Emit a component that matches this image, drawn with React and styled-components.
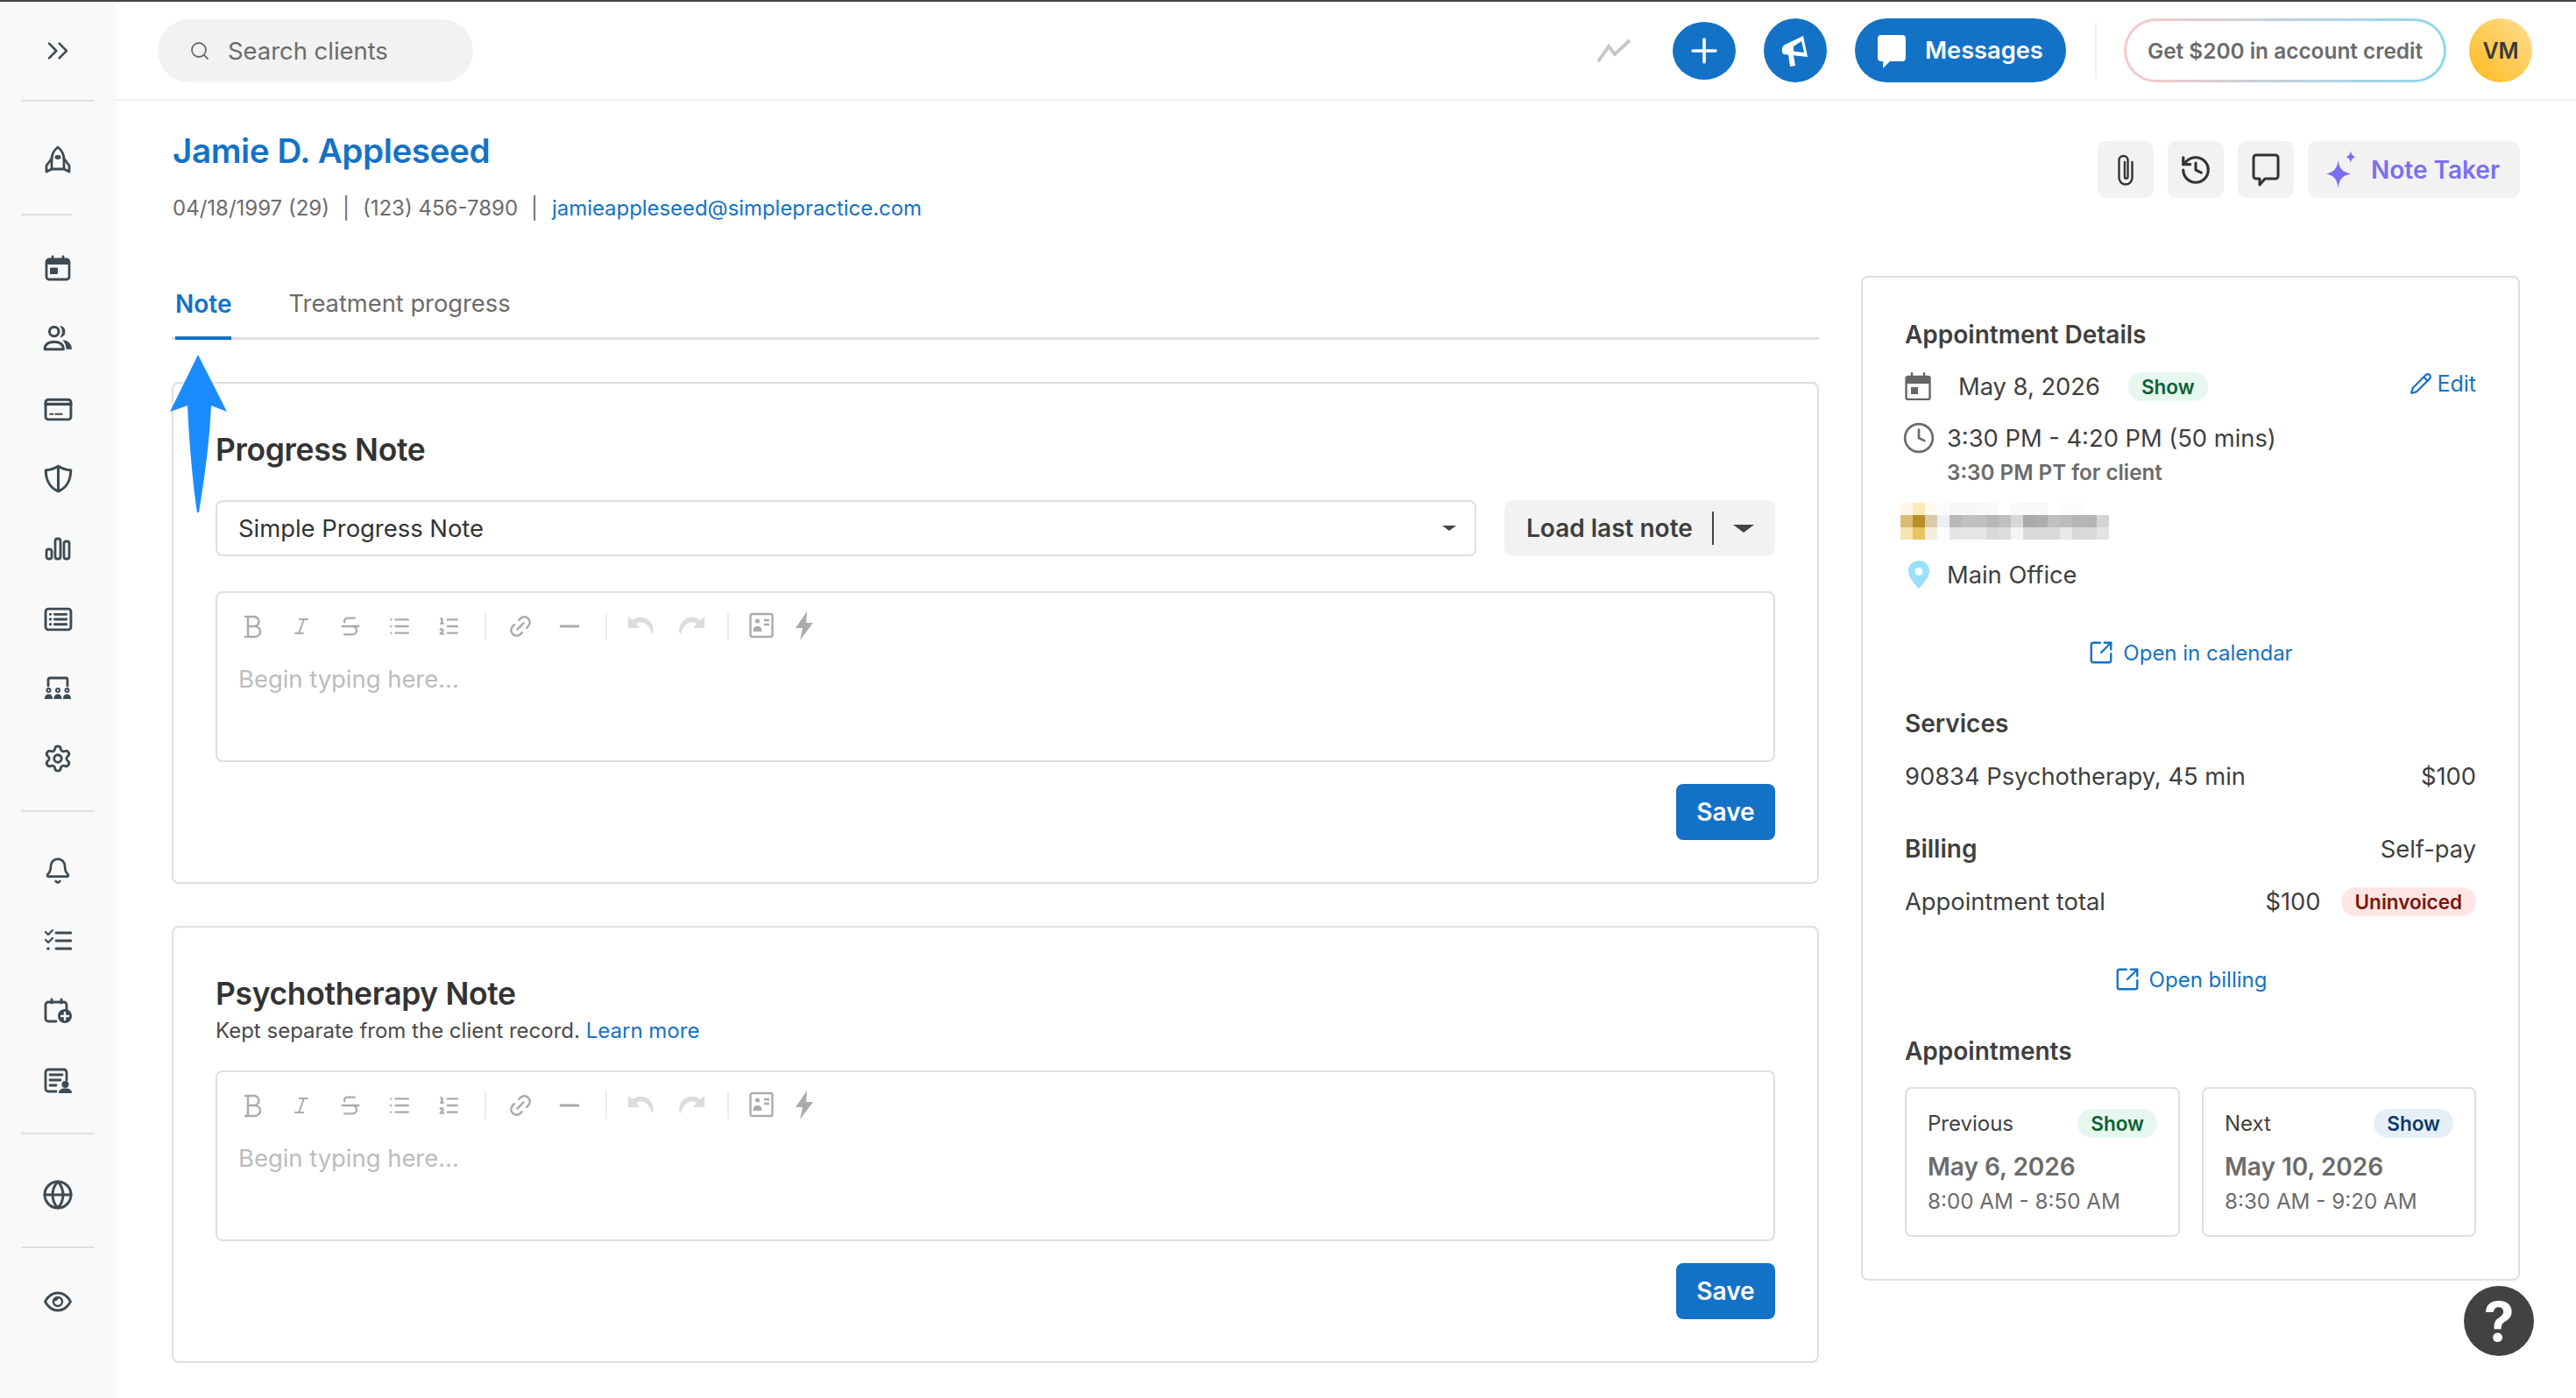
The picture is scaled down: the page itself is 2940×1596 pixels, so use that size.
import React from "react";
import styled, { createGlobalStyle } from "styled-components";
import { ChevronsRight, Settings, Bell, Globe, Search, History, Italic, Strikethrough, List, ListOrdered, Link2, Minus, Pencil, SquareArrowOutUpRight, Clock, Plus } from "lucide-react";

const Global = createGlobalStyle`
  html, body { margin: 0; padding: 0; background: #fff; }
  body { font-family: Inter, "Noto Sans", "Liberation Sans", sans-serif; color: #3d3d3d; width: 2940px; height: 1596px; overflow: hidden; }
  * { box-sizing: border-box; }
`;

const BLUE = "#1472c6";
const INK = "#3f3f3f";
const GRAY = "#6b6b6b";
const LINE = "#dfdfdf";
const NAV = "#3e4a52";

const Page = styled.div`display: flex; width: 2940px; height: 1596px; border-top: 2px solid #3f4444; position: relative; overflow: hidden;`;
const Sidebar = styled.nav`width: 132px; flex: none; background: #f9f9f9; display: flex; flex-direction: column;`;
const NavGroup = styled.div`display: flex; flex-direction: column; align-items: center; padding-top: ${p => p.$top}px; padding-bottom: ${p => p.$bottom}px;`;
const NavItem = styled.div`height: ${p => p.$h || 80}px; width: 100%; display: flex; align-items: center; justify-content: center; color: ${NAV}; svg { display: block; }`;
const NavRule = styled.div`height: 2px; background: #e0e0e0; margin-left: 24px; width: ${p => (p.$short ? 58 : 84)}px;`;

const Main = styled.div`flex: 1; min-width: 0; display: flex; flex-direction: column;`;
const TopBar = styled.header`height: 113px; flex: none; border-bottom: 2px solid #f1f1f1; display: flex; align-items: center; padding: 0 50px 0 48px;`;
const SearchPill = styled.div`width: 360px; height: 72px; border-radius: 36px; background: #f2f2f2; display: flex; align-items: center; gap: 20px; padding-left: 36px; color: ${GRAY}; font-size: 27.4px;`;
const Spacer = styled.div`flex: 1;`;
const RoundButton = styled.div`width: 72px; height: ${p => p.$h || 73}px; border-radius: 50%; background: ${BLUE}; color: #fff; display: flex; align-items: center; justify-content: center; margin-left: ${p => p.$ml}px; flex: none;`;
const TrendBox = styled.div`display: flex; color: #c6c6c6;`;
const MessagesButton = styled.div`width: 241px; height: 73px; border-radius: 37px; background: ${BLUE}; color: #fff; display: flex; align-items: center; gap: 21px; padding-left: 25px; margin-left: 32px; font-size: 27.2px; font-weight: 600;`;
const BarRule = styled.div`width: 2px; height: 65px; background: #f0f0f0; margin-left: 33px;`;
const CreditPill = styled.div`width: 368px; height: 73px; border-radius: 37px; margin-left: 31px; padding: 3px; background: linear-gradient(90deg, #f8c9c9, #8ad8ee);`;
const CreditInner = styled.div`width: 100%; height: 100%; border-radius: 34px; background: #fff; display: flex; align-items: center; justify-content: center; font-size: 24.4px; font-weight: 600; color: ${GRAY};`;
const Avatar = styled.div`width: 72px; height: 73px; border-radius: 50%; margin-left: 26px; background: linear-gradient(45deg, #ffb81c, #ffdf94); display: flex; align-items: center; justify-content: center; font-size: 25px; font-weight: 600; color: #3a3a3a;`;

const Content = styled.div`padding: 0 64px; display: flex; flex-direction: column; position: relative;`;
const Head = styled.div`display: flex; justify-content: space-between; height: 200px; flex: none;`;
const HeadLeft = styled.div`padding-top: 29px; padding-left: 1px;`;
const ClientName = styled.div`font-size: 38.6px; line-height: 56px; font-weight: 600; color: ${BLUE}; letter-spacing: -0.4px;`;
const ClientInfo = styled.div`font-size: 24px; line-height: 40px; margin-top: 18px; color: ${GRAY}; display: flex; gap: 15px;`;
const BlueLink = styled.span`color: ${BLUE};`;
const EmailLink = styled(BlueLink)`font-size: 23.9px; margin-left: 1px;`;
const HeadActions = styled.div`display: flex; gap: 16px; padding-top: 46px;`;
const ActionButton = styled.div`width: 64px; height: 65px; border-radius: 10px; background: #f2f2f2; display: flex; align-items: center; justify-content: center; color: #333;`;
const NoteTaker = styled.div`width: 242px; height: 65px; border-radius: 10px; background: #f2f2f2; display: flex; align-items: center; gap: 14px; padding-left: 20px; color: #7a6ff0; font-size: 28px; font-weight: 600;`;

const Columns = styled.div`display: grid; grid-template-columns: 1880px 752px; column-gap: 48px; align-items: start;`;
const LeftCol = styled.div`display: flex; flex-direction: column;`;
const Tabs = styled.div`height: 73px; border-bottom: 3px solid ${LINE}; display: flex; padding-left: 4px; gap: 65px; margin-bottom: 48px;`;
const Tab = styled.div`height: 73px; display: flex; align-items: flex-start; padding-top: 13px; line-height: 38px; font-size: ${p => (p.$active ? 28 : 27.3)}px; font-weight: ${p => (p.$active ? 600 : 400)}; color: ${p => (p.$active ? BLUE : GRAY)}; border-bottom: ${p => (p.$active ? `4px solid ${BLUE}` : "none")};`;
const Card = styled.section`border: 2px solid ${LINE}; border-radius: 8px; padding: ${p => p.$top}px 48px 48px; margin-bottom: 48px;`;
const CardTitle = styled.h2`margin: 0; font-size: 35.4px; line-height: 44px; font-weight: 600; color: #333; letter-spacing: -0.3px;`;
const CardSub = styled.div`font-size: 24px; line-height: 36px; margin-top: 2px; color: #4a4a4a;`;
const SelectRow = styled.div`display: flex; gap: 32px; margin-top: 35px;`;
const SelectBox = styled.div`flex: 1; height: 64px; border: 2px solid ${LINE}; border-radius: 8px; display: flex; align-items: center; justify-content: space-between; padding: 0 21px 0 24px; font-size: 27.4px; color: #333;`;
const Caret = styled.span`width: 0; height: 0; border-left: ${p => p.$s}px solid transparent; border-right: ${p => p.$s}px solid transparent; border-top: ${p => p.$s * 0.75}px solid #444;`;
const LoadButton = styled.div`width: 309px; flex: none; height: 64px; border-radius: 10px; background: #f2f2f2; display: flex; align-items: center; padding-left: 25px; font-size: 28px; font-weight: 600; color: ${INK};`;
const LoadRule = styled.span`width: 2px; height: 38px; background: #444; margin: 0 22px 0 22px;`;
const Editor = styled.div`margin-top: ${p => p.$mt}px; height: 195px; border: 2px solid ${LINE}; border-radius: 8px;`;
const Toolbar = styled.div`display: flex; align-items: center; height: 36px; margin-top: 20px; padding-left: 12px;`;
const Tool = styled.span`width: ${p => p.$w || 56}px; height: 36px; flex: none; display: flex; align-items: center; justify-content: center; color: #ababab;`;
const ToolRule = styled.span`width: 2px; height: 32px; background: #ededed; margin-left: ${p => p.$ml || 13}px; margin-right: ${p => p.$mr || 11}px;`;
const Placeholder = styled.div`margin: 22px 0 0 24px; font-size: 27.4px; line-height: 40px; color: #bcbcbc;`;
const SaveRow = styled.div`display: flex; justify-content: flex-end; margin-top: 25px;`;
const SaveButton = styled.div`width: 113px; height: 64px; border-radius: 8px; background: ${BLUE}; color: #fff; display: flex; align-items: center; justify-content: center; font-size: 28px; font-weight: 600;`;

const Panel = styled.aside`border: 2px solid ${LINE}; border-radius: 8px; padding: 45px 48px 48px; height: 1147px;`;
const PanelTitle = styled.div`font-size: 28px; line-height: 40px; font-weight: 600; color: ${INK}; margin-top: ${p => p.$mt || 0}px;`;
const Row = styled.div`display: flex; align-items: center; height: 40px; font-size: 27.3px; color: ${INK}; margin-top: ${p => p.$mt || 0}px; justify-content: ${p => (p.$between ? "space-between" : "flex-start")};`;
const IconSlot = styled.span`width: ${p => p.$w}px; flex: none; display: flex; color: ${GRAY};`;
const ClockWrap = styled.span`display: flex; margin: 0 -3px;`;
const PinWrap = styled.span`display: flex; margin-left: 4px;`;
const Badge = styled.span`display: inline-flex; align-items: center; justify-content: center; height: 33px; padding: 0 ${p => p.$pad || 15}px; margin-left: ${p => p.$ml || 0}px; border-radius: 17px; font-size: 22.5px; font-weight: 600; background: ${p => p.$bg}; color: ${p => p.$fg}; flex: none;`;
const EditLink = styled.span`margin-left: auto; display: flex; align-items: center; gap: 5px; color: ${BLUE}; font-size: 25px; position: relative; top: -3px;`;
const SubLine = styled.div`font-size: 24.2px; line-height: 36px; font-weight: 600; color: ${GRAY}; margin: 2px 0 0 48px;`;
const Pixelated = styled.svg`display: block; margin: 16px 0 0 -5px;`;
const OpenLink = styled.div`display: flex; justify-content: center; align-items: center; gap: 10px; height: 40px; font-size: 24px; color: ${BLUE}; margin-top: ${p => p.$mt}px;`;
const Right = styled.div`display: flex; align-items: center; gap: 23px;`;
const MiniCards = styled.div`display: grid; grid-template-columns: 314px 313px; column-gap: 25px; margin-top: 21px;`;
const MiniCard = styled.div`height: 171px; border: 2px solid ${LINE}; border-radius: 8px; padding: 22px 24px 0;`;
const MiniHead = styled.div`display: flex; justify-content: space-between; align-items: center; height: 35px; font-size: 24px; color: ${INK};`;
const MiniDate = styled.div`font-size: 28px; line-height: 40px; font-weight: 600; color: ${GRAY}; margin-top: 12px;`;
const MiniTime = styled.div`font-size: 24.200px; line-height: 36px; color: ${GRAY}; margin-top: 2px;`;
const HelpFab = styled.div`position: absolute; left: 2812px; top: 1466px; width: 80px; height: 80px; border-radius: 50%; background: #424242; color: #fff; display: flex; align-items: center; justify-content: center; font-size: 62px; font-weight: 700;`;
const ArrowMark = styled.svg`position: absolute; left: 189px; top: 398px; pointer-events: none;`;

const S = ({ children, w = 32, h = 32, vb = "0 0 32 32", ...r }) => (
  <svg width={w} height={h} viewBox={vb} fill="none" stroke="currentColor" strokeWidth="2.8" strokeLinecap="round" strokeLinejoin="round" {...r}>{children}</svg>
);
const F = { fill: "currentColor", stroke: "none" };

const Rocket = () => <S><path d="M16 2C21 6 23 11 23 16V27H9V16C9 11 11 6 16 2Z" /><path d="M9 15 3 23V30L9 27M23 15 29 23V30L23 27" /><ellipse cx="16" cy="13.5" rx="3.5" ry="2.4" {...F} /></S>;
const Cal = () => <S><rect x="3" y="6" width="26" height="23" rx="3" /><path d="M3 9a3 3 0 0 1 3-3h20a3 3 0 0 1 3 3v3H3Z" {...F} /><path d="M10 3v4M22 3v4" /><rect x="7" y="15.5" width="9" height="7.5" rx="1" {...F} /></S>;
const Users = () => <S w={34} h={34}><circle cx="12" cy="9" r="5" /><path d="M2 28c0-6 5-8 10-8s10 2 10 8Z" /><path d="M19 3.2a6 6 0 0 1 0 11.6c1.500-1.500 2.200-3.700 2.200-5.800S20.500 4.700 19 3.200Z" {...F} stroke="currentColor" strokeWidth="1" /><path d="M21 18c6 0 10 4 10 10h-6c0-4-1.500-7.500-4-10Z" {...F} /></S>;
const CardIcon = () => <S w={33} h={33}><rect x="2" y="6" width="28" height="22" rx="3" /><path d="M2 11h28" strokeWidth="3.2" /><path d="M7 22h3M13 22h7" strokeWidth="2" /></S>;
const Shield = () => <S w={35} h={35}><path d="M16 3C11 6 7 7 3 7c0 11 5 19 13 22 8-3 13-11 13-22-4 0-8-1-13-4Z" /><path d="M16 3v26" /></S>;
const Bars = () => <S><rect x="3" y="17" width="6" height="11" rx="2.600" /><rect x="13" y="5" width="6" height="23" rx="2.600" /><rect x="23" y="8" width="6" height="20" rx="2.600" /></S>;
const ListCard = () => <S w={33} h={33}><rect x="2" y="5" width="28" height="23" rx="3" /><path d="M12 11h13M12 16.500h13M12 22h13" /><path d="M7 11h.5M7 16.500h.5M7 22h.5" /></S>;
const Presenter = () => <S><path d="M5 13V6a2 2 0 0 1 2-2h18a2 2 0 0 1 2 2v7" /><circle cx="5.500" cy="18" r="2" strokeWidth="2" /><circle cx="16" cy="18" r="2" strokeWidth="2" /><circle cx="26.500" cy="18" r="2" strokeWidth="2" /><path d="M1 28c0-4 2-5.500 4.500-5.500s4.500 1.500 4.500 5.500ZM11.500 28c0-4 2-5.500 4.500-5.500s4.500 1.500 4.500 5.500ZM22 28c0-4 2-5.500 4.500-5.500S31 24 31 28Z" {...F} /></S>;
const Checks = () => <S><path d="M2 6l3 3 5-5M2 15l3 3 5-5" strokeWidth="2.200" /><path d="M14 7h17M14 16h17M14 25h17" /><circle cx="5" cy="25" r="1.800" {...F} /></S>;
const CalPlus = () => <S><path d="M14 28H5a3 3 0 0 1-3-3V9a3 3 0 0 1 3-3h18a3 3 0 0 1 3 3v6" /><path d="M9 3v4M20 3v4" /><circle cx="24" cy="22" r="8" {...F} /><path d="M24 18v8M20 22h8" stroke="#f9f9f9" strokeWidth="2.400" /></S>;
const NotePerson = () => <S><path d="M14 28H5a3 3 0 0 1-3-3V6a3 3 0 0 1 3-3h18a3 3 0 0 1 3 3v9" /><path d="M7 9h14M7 15h12M7 21h7" /><circle cx="24.500" cy="20" r="4" {...F} /><path d="M17 30c0-4 3-5.500 7.500-5.500S32 26 32 30Z" {...F} /></S>;
const EyeIcon = () => <S><path d="M1.500 16C5 9.500 10 6 16 6s11 3.500 14.500 10C27 22.500 22 26 16 26S5 22.500 1.500 16Z" /><circle cx="16" cy="16" r="5" strokeWidth="2.400" /><path d="M11.500 15a5 5 0 0 1 5-4.500c1 3-2 5.500-5 4.500Z" {...F} /></S>;
const Trend = () => <S w={40} h={28} vb="0 0 40 28" strokeWidth="3.800" strokeLinecap="butt" strokeLinejoin="miter"><path d="M2 26 14 9l7 9L38 2" /></S>;
const Megaphone = () => (
  <svg width="34" height="38" viewBox="0 0 34 38" fill="none">
    <path d="M26 2 31 26 4 23c-3-1-3-9 1-11Z" fill="#fff" />
    <path d="M24 8 27 21 15 19.500 15 14Z" fill={BLUE} />
    <path d="M9 23 15 24 17 36 11 37Z" fill="#fff" />
  </svg>
);
const Bubble = ({ filled }) => (
  <svg width="34" height="40" viewBox="0 0 34 40" fill={filled ? "#fff" : "none"} stroke={filled ? "none" : "currentColor"} strokeWidth="3" strokeLinejoin="round">
    {filled ? <path d="M5 2h24a4 4 0 0 1 4 4v22a4 4 0 0 1-4 4H15l-8 8v-8H5a4 4 0 0 1-4-4V6a4 4 0 0 1 4-4Z" />
      : <path d="M6 3h22a3 3 0 0 1 3 3v21a3 3 0 0 1-3 3H16l-6 7v-7H6a3 3 0 0 1-3-3V6a3 3 0 0 1 3-3Z" />}
  </svg>
);
const Clip = () => <S w={24} h={38} vb="0 0 24 38" strokeWidth="2.400"><path d="M19.500 10v18a7.500 7.500 0 0 1-15 0V8a5 5 0 0 1 10 0v19a1.800 1.800 0 0 1-3.600 0V10" /></S>;
const Sparkle = () => <svg width="38" height="44" viewBox="0 0 34 40" fill="#7a6ff0"><path d="M14 10c1 8 4 12 13 14-9 2-12 6-13 15-1-9-4-13-12-15 8-2 11-6 12-14Z" transform="translate(-1 0)" /><path d="M26 0c.6 4 2 5.500 5 6.500-3 1-4.400 2.500-5 6.500-.6-4-2-5.500-5-6.500 3-1 4.400-2.500 5-6.500Z" /></svg>;
const UndoIcon = ({ flip }) => <svg width="36" height="24" viewBox="0 0 36 24" fill="#dcdcdc" style={flip ? { transform: "scaleX(-1)" } : undefined}><path d="M1 1v13h13l-4-5c7-4 14-1 18 12 4-3 1-17-10-19-4-1-9 0-12 3Z" /></svg>;
const ContactCard = () => <svg width="28" height="34" viewBox="0 0 28 34" fill="none" stroke="#ababab" strokeWidth="2.400"><rect x="1.500" y="3" width="25" height="26" rx="2" /><circle cx="9.500" cy="11" r="2.500" fill="#ababab" stroke="none" /><path d="M4.500 23c0-5 2-6 5-6s5 1 5 6Z" fill="#ababab" stroke="none" /><path d="M17 10h6M17 15h6" /></svg>;
const Bolt = () => <svg width="22" height="36" viewBox="0 0 22 36" fill="#ababab"><path d="M14 1 1 20h8l-3 14 15-20h-8Z" /></svg>;
const SlabBold = () => <S w={24} h={30} vb="0 0 24 30" strokeWidth="2.400"><path d="M4 4h10a5.500 5.500 0 0 1 0 11H7M7 15h8a6 6 0 0 1 0 12H4M7 4v23" /></S>;
const Pin = () => <svg width="24" height="32" viewBox="0 0 24 32"><path fillRule="evenodd" d="M12 0c7 0 12 5 12 12 0 6-6 14-12 20C6 26 0 18 0 12 0 5 5 0 12 0Zm0 8a4.500 4.500 0 1 0 0 9 4.500 4.500 0 0 0 0-9Z" fill="#9be0fb" /></svg>;
const CalSmall = () => <S w={30} h={32} vb="0 0 30 32" strokeWidth="2.400"><rect x="1.500" y="5" width="27" height="26" rx="2" stroke="#666" /><path d="M1.500 7a2 2 0 0 1 2-2h23a2 2 0 0 1 2 2v6h-27Z" fill="#666" stroke="none" /><path d="M8 1v5M22 1v5" stroke="#666" /><rect x="7" y="17" width="8" height="8" fill="#666" stroke="none" /></S>;

const pixelRows = [
  ["#fdf6e6", "#fbeab8", "#fefaf0", "#fbfbfd", "#f7f7f7", "#f7f7f7", "#f8f8f8", "#f9f9f9", "#fff", "#f9f9f9", "#f8f8f8", "#f8f8f8", "#fff", "#fbfbfb", "#fbfbfb", "#fff", "#fff"],
  ["#d9bd75", "#b98e25", "#d8cbab", "#eceef2", "#b8b8b8", "#c0c0c0", "#c0c0c0", "#b8b8b8", "#bfbfbf", "#d8d8d8", "#a9a9a9", "#adadad", "#c0c0c0", "#bbbbbb", "#b5b5b5", "#b5b5b5", "#d4d4d4"],
  ["#f5e3b0", "#e8c560", "#f5eeda", "#fcfcfe", "#e4e4e4", "#e4e4e4", "#e4e4e4", "#d8d8d8", "#dcdcdc", "#f4f4f4", "#dadada", "#dadada", "#dadada", "#e8e8e8", "#d8d8d8", "#d8d8d8", "#e4e4e4"],
];

const EditorBlock = ({ mt }) => (
  <Editor $mt={mt}>
    <Toolbar>
      <Tool><SlabBold /></Tool>
      <Tool><Italic size={24} strokeWidth={2} /></Tool>
      <Tool><Strikethrough size={28} strokeWidth={2} /></Tool>
      <Tool><List size={26} strokeWidth={2.2} /></Tool>
      <Tool><ListOrdered size={26} strokeWidth={2.2} /></Tool>
      <ToolRule />
      <Tool><Link2 size={30} strokeWidth={2} style={{ transform: "rotate(-45deg)" }} /></Tool>
      <Tool><Minus size={34} strokeWidth={2} /></Tool>
      <ToolRule $mr={13} />
      <Tool><UndoIcon /></Tool>
      <Tool $w={50}><UndoIcon flip /></Tool>
      <ToolRule $ml={18} $mr={13} />
      <Tool $w={48}><ContactCard /></Tool>
      <Tool $w={50}><Bolt /></Tool>
    </Toolbar>
    <Placeholder>Begin typing here...</Placeholder>
  </Editor>
);

const Save = () => <SaveRow><SaveButton>Save</SaveButton></SaveRow>;

export default function App() {
  return (
    <Page>
      <Global />
      <Sidebar>
        <NavGroup $top={0}><NavItem $h={112}><ChevronsRight size={40} strokeWidth={1.5} /></NavItem></NavGroup>
        <NavRule />
        <NavGroup $top={4}><NavItem $h={124}><Rocket /></NavItem></NavGroup>
        <NavRule $short />
        <NavGroup $top={20} $bottom={19}>
          <NavItem><Cal /></NavItem>
          <NavItem><Users /></NavItem>
          <NavItem><CardIcon /></NavItem>
          <NavItem><Shield /></NavItem>
          <NavItem><Bars /></NavItem>
          <NavItem><ListCard /></NavItem>
          <NavItem><Presenter /></NavItem>
          <NavItem><Settings size={34} strokeWidth={2} /></NavItem>
        </NavGroup>
        <NavRule />
        <NavGroup $top={27} $bottom={19}>
          <NavItem><Bell size={32} strokeWidth={2} /></NavItem>
          <NavItem><Checks /></NavItem>
          <NavItem><CalPlus /></NavItem>
          <NavItem><NotePerson /></NavItem>
        </NavGroup>
        <NavRule />
        <NavGroup $top={10}><NavItem $h={118}><Globe size={36} strokeWidth={2} /></NavItem></NavGroup>
        <NavRule />
        <NavGroup $top={0}><NavItem $h={122}><EyeIcon /></NavItem></NavGroup>
      </Sidebar>
      <Main>
        <TopBar>
          <SearchPill><Search size={24} strokeWidth={1.8} />Search clients</SearchPill>
          <Spacer />
          <TrendBox><Trend /></TrendBox>
          <RoundButton $ml={47} $h={66}><Plus size={44} strokeWidth={2} /></RoundButton>
          <RoundButton $ml={32}><Megaphone /></RoundButton>
          <MessagesButton><Bubble filled />Messages</MessagesButton>
          <BarRule />
          <CreditPill><CreditInner>Get $200 in account credit</CreditInner></CreditPill>
          <Avatar>VM</Avatar>
        </TopBar>
        <Content>
          <Head>
            <HeadLeft>
              <ClientName>Jamie D. Appleseed</ClientName>
              <ClientInfo>
                <span>04/18/1997 (29)</span><span>|</span><span>(123) 456-7890</span><span>|</span>
                <EmailLink>jamieappleseed@simplepractice.com</EmailLink>
              </ClientInfo>
            </HeadLeft>
            <HeadActions>
              <ActionButton><Clip /></ActionButton>
              <ActionButton><History size={38} strokeWidth={2} /></ActionButton>
              <ActionButton><Bubble /></ActionButton>
              <NoteTaker><Sparkle />Note Taker</NoteTaker>
            </HeadActions>
          </Head>
          <Columns>
            <LeftCol>
              <Tabs>
                <Tab $active>Note</Tab>
                <Tab>Treatment progress</Tab>
              </Tabs>
              <Card $top={54}>
                <CardTitle>Progress Note</CardTitle>
                <SelectRow>
                  <SelectBox>Simple Progress Note<Caret $s={8} /></SelectBox>
                  <LoadButton>Load last note<LoadRule /><Caret $s={12} /></LoadButton>
                </SelectRow>
                <EditorBlock mt={40} />
                <Save />
              </Card>
              <Card $top={54}>
                <CardTitle>Psychotherapy Note</CardTitle>
                <CardSub>Kept separate from the client record. <BlueLink>Learn more</BlueLink></CardSub>
                <EditorBlock mt={27} />
                <Save />
              </Card>
            </LeftCol>
            <Panel>
              <PanelTitle>Appointment Details</PanelTitle>
              <Row $mt={19}>
                <IconSlot $w={61}><CalSmall /></IconSlot>
                May 8, 2026
                <Badge $bg="#e6f7ef" $fg="#0b6133" $ml={32}>Show</Badge>
                <EditLink><Pencil size={26} strokeWidth={2} />Edit</EditLink>
              </Row>
              <Row $mt={19}><IconSlot $w={48}><ClockWrap><Clock size={38} strokeWidth={1.7} /></ClockWrap></IconSlot>3:30 PM - 4:20 PM (50 mins)</Row>
              <SubLine>3:30 PM PT for client</SubLine>
              <Pixelated width="238" height="42" viewBox="0 0 238 42" shapeRendering="crispEdges">
                {pixelRows.map((r, y) => r.map((c, x) => <rect key={`${x}-${y}`} x={x * 14} y={y * 14} width="14" height="14" fill={c} />))}
              </Pixelated>
              <Row $mt={20}><IconSlot $w={48}><PinWrap><Pin /></PinWrap></IconSlot>Main Office</Row>
              <OpenLink $mt={49}><SquareArrowOutUpRight size={30} strokeWidth={1.9} />Open in calendar</OpenLink>
              <PanelTitle $mt={41}>Services</PanelTitle>
              <Row $mt={20} $between><span>90834 Psychotherapy, 45 min</span><span>$100</span></Row>
              <Row $mt={43} $between><PanelTitle>Billing</PanelTitle><span>Self-pay</span></Row>
              <Row $mt={20} $between>
                <span>Appointment total</span>
                <Right><span>$100</span><Badge $bg="#fde6e4" $fg="#7d1408" $pad={16}>Uninvoiced</Badge></Right>
              </Row>
              <OpenLink $mt={49}><SquareArrowOutUpRight size={30} strokeWidth={1.9} />Open billing</OpenLink>
              <PanelTitle $mt={42}>Appointments</PanelTitle>
              <MiniCards>
                <MiniCard>
                  <MiniHead>Previous<Badge $bg="#e6f7ef" $fg="#0b6133">Show</Badge></MiniHead>
                  <MiniDate>May 6, 2026</MiniDate>
                  <MiniTime>8:00 AM - 8:50 AM</MiniTime>
                </MiniCard>
                <MiniCard>
                  <MiniHead>Next<Badge $bg="#e6eff8" $fg="#0c3a6b">Show</Badge></MiniHead>
                  <MiniDate>May 10, 2026</MiniDate>
                  <MiniTime>8:30 AM - 9:20 AM</MiniTime>
                </MiniCard>
              </MiniCards>
            </Panel>
          </Columns>
        </Content>
      </Main>
      <ArrowMark width="76" height="190" viewBox="0 0 76 190">
        <path d="M37 5 5 70 25 63C27 110 32 160 36 185L38 185C42 160 50 110 52 63L70 70Z" fill="#1a8cff" />
      </ArrowMark>
      <HelpFab>?</HelpFab>
    </Page>
  );
}
